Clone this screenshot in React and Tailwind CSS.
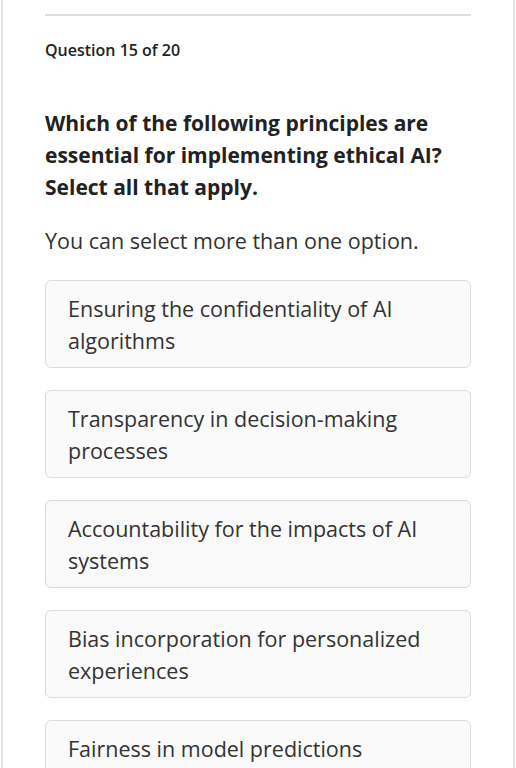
export default function App() {
  const options = [
    "Ensuring the confidentiality of AI algorithms",
    "Transparency in decision-making processes",
    "Accountability for the impacts of AI systems",
    "Bias incorporation for personalized experiences",
    "Fairness in model predictions",
  ];

  return (
    <div
      className="h-[768px] overflow-hidden bg-white"
      style={{ fontFamily: '"Open Sans", "Liberation Sans", sans-serif' }}
    >
      <div className="ml-px w-[514px] min-h-full border-x-2 border-[#e3e3e3] pl-[42px] pr-[42px] pt-[14px]">
        <div className="h-[2px] bg-[#dedede]" />
        <div className="mt-[24px] text-[16px] font-semibold leading-[20px] text-[#222]">
          Question 15 of 20
        </div>
        <h1 className="mt-[47px] text-[21px] font-bold leading-[32px] text-[#222]">
          Which of the following principles are essential for implementing ethical AI? Select all that apply.
        </h1>
        <p className="mt-[22px] text-[21.5px] leading-[32px] text-[#333]">
          You can select more than one option.
        </p>
        <div className="mt-[23px] flex flex-col gap-[22px]">
          {options.map((opt) => (
            <div
              key={opt}
              className="rounded-md border border-[#dcdcdc] bg-[#fafafa] pl-[22px] pr-[30px] pt-[12px] pb-[10px] text-[21.5px] leading-[32px] text-[#333]"
            >
              {opt}
            </div>
          ))}
        </div>
      </div>
    </div>
  );
}
